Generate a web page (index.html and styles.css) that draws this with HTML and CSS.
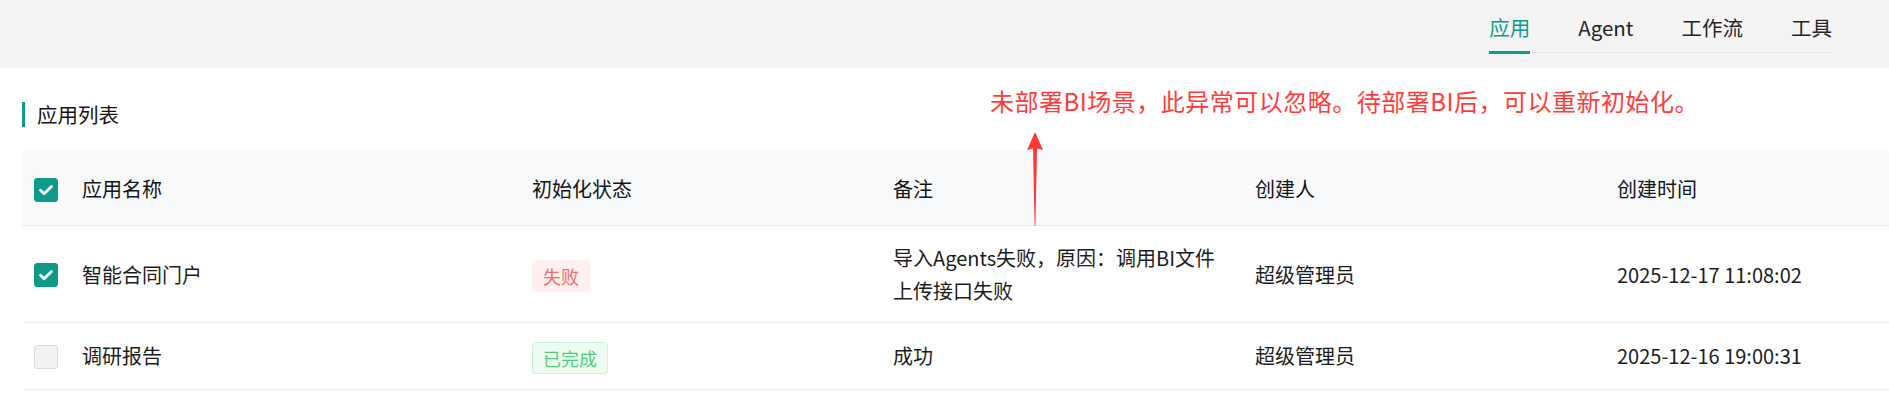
FILE: index.html
```html
<!DOCTYPE html>
<html lang="zh-CN">
<head>
<meta charset="utf-8">
<title>应用列表</title>
<link rel="stylesheet" href="styles.css">
</head>
<body>
<header class="topbar">
  <nav class="tabs">
    <a class="tab active">应用</a>
    <a class="tab">Agent</a>
    <a class="tab">工作流</a>
    <a class="tab">工具</a>
  </nav>
</header>
<main class="content">
  <h2 class="section-title">应用列表</h2>
  <div class="table">
    <div class="row head">
      <div class="cell"><span class="checkbox checked"><svg viewBox="0 0 24 24" width="24" height="24"><path d="M6.5 12.2l3.6 3.6 7.4-7.4" fill="none" stroke="#fff" stroke-width="2.8" stroke-linecap="round" stroke-linejoin="round"/></svg></span></div>
      <div class="cell">应用名称</div>
      <div class="cell">初始化状态</div>
      <div class="cell">备注</div>
      <div class="cell">创建人</div>
      <div class="cell">创建时间</div>
    </div>
    <div class="row">
      <div class="cell"><span class="checkbox checked"><svg viewBox="0 0 24 24" width="24" height="24"><path d="M6.5 12.2l3.6 3.6 7.4-7.4" fill="none" stroke="#fff" stroke-width="2.8" stroke-linecap="round" stroke-linejoin="round"/></svg></span></div>
      <div class="cell">智能合同门户</div>
      <div class="cell"><span class="tag tag-fail">失败</span></div>
      <div class="cell remark">导入Agents失败，原因：调用BI文件上传接口失败</div>
      <div class="cell">超级管理员</div>
      <div class="cell">2025-12-17 11:08:02</div>
    </div>
    <div class="row">
      <div class="cell"><span class="checkbox"></span></div>
      <div class="cell">调研报告</div>
      <div class="cell"><span class="tag tag-ok">已完成</span></div>
      <div class="cell">成功</div>
      <div class="cell">超级管理员</div>
      <div class="cell">2025-12-16 19:00:31</div>
    </div>
  </div>
</main>
<div class="note">未部署BI场景，此异常可以忽略。待部署BI后，可以重新初始化。</div>
<svg class="arrow" viewBox="0 0 18 95" width="18" height="95"><polygon points="9,0 17,18 11,16.5 9.4,94 8.6,94 7,16.5 1,18" fill="#ff3838"/></svg>
</body>
</html>
```
FILE: styles.css
```css
* { box-sizing: border-box; }
html, body { margin: 0; padding: 0; }
body {
  font-family: "Noto Sans CJK SC", "Noto Sans", sans-serif;
  color: #1c1c1c;
  background: #fff;
  width: 1889px;
  height: 400px;
  overflow: hidden;
  position: relative;
}
.topbar {
  height: 68px;
  background: #f4f4f4;
  display: flex;
  justify-content: flex-end;
  padding-right: 57px;
}
.tabs {
  display: flex;
  gap: 48px;
  height: 53px;
  border-bottom: 1px solid #e6e6e6;
  align-items: flex-start;
}
.tab {
  font-size: 20.5px;
  line-height: 28px;
  padding: 13px 0 10px;
  border-bottom: 3px solid transparent;
  color: #262626;
  cursor: pointer;
}
.tab.active {
  color: #0e9a88;
  border-bottom-color: #0e9a88;
}
.content {
  padding-left: 22px;
}
.section-title {
  margin: 34px 0 24px;
  font-size: 20.5px;
  font-weight: 400;
  line-height: 25px;
  border-left: 3px solid #0e9a88;
  padding-left: 12px;
  color: #141414;
}
.table {
  width: 1867px;
}
.row {
  display: grid;
  grid-template-columns: 48px 450px 361px 362px 362px 1fr;
  border-bottom: 1px solid #ededed;
  align-items: center;
  font-size: 20px;
  line-height: 33px;
}
.row .cell {
  padding: 15px 0 15px 12px;
}
.row.head {
  background: #f8f9fa;
  color: #141414;
}
.row.head .cell {
  padding-top: 21px;
  padding-bottom: 20px;
}
.remark {
  padding-right: 12px !important;
}
.checkbox {
  display: block;
  width: 24px;
  height: 24px;
  border-radius: 3px;
  border: 1px solid #dadada;
  background: #f2f2f2;
  margin-top: 2px;
}
.checkbox svg { display: block; margin: -1px; }
.checkbox.checked {
  background: #0e9a88;
  border-color: #0e9a88;
}
.tag {
  display: inline-block;
  vertical-align: middle;
  font-size: 18px;
  line-height: 30px;
  padding: 0 10px;
  border-radius: 4px;
  border: 1px solid transparent;
}
.tag-fail {
  background: #fff0f0;
  border-color: #fff0f0;
  color: #f06b6b;
}
.tag-ok {
  background: #edfdf2;
  border-color: #c8f3d5;
  color: #4fcd7b;
}
.note {
  position: absolute;
  left: 990px;
  top: 85px;
  font-size: 24px;
  line-height: 32px;
  letter-spacing: 0.5px;
  color: #ff3b3b;
  white-space: nowrap;
}
.arrow {
  position: absolute;
  left: 1026px;
  top: 132px;
}
```
